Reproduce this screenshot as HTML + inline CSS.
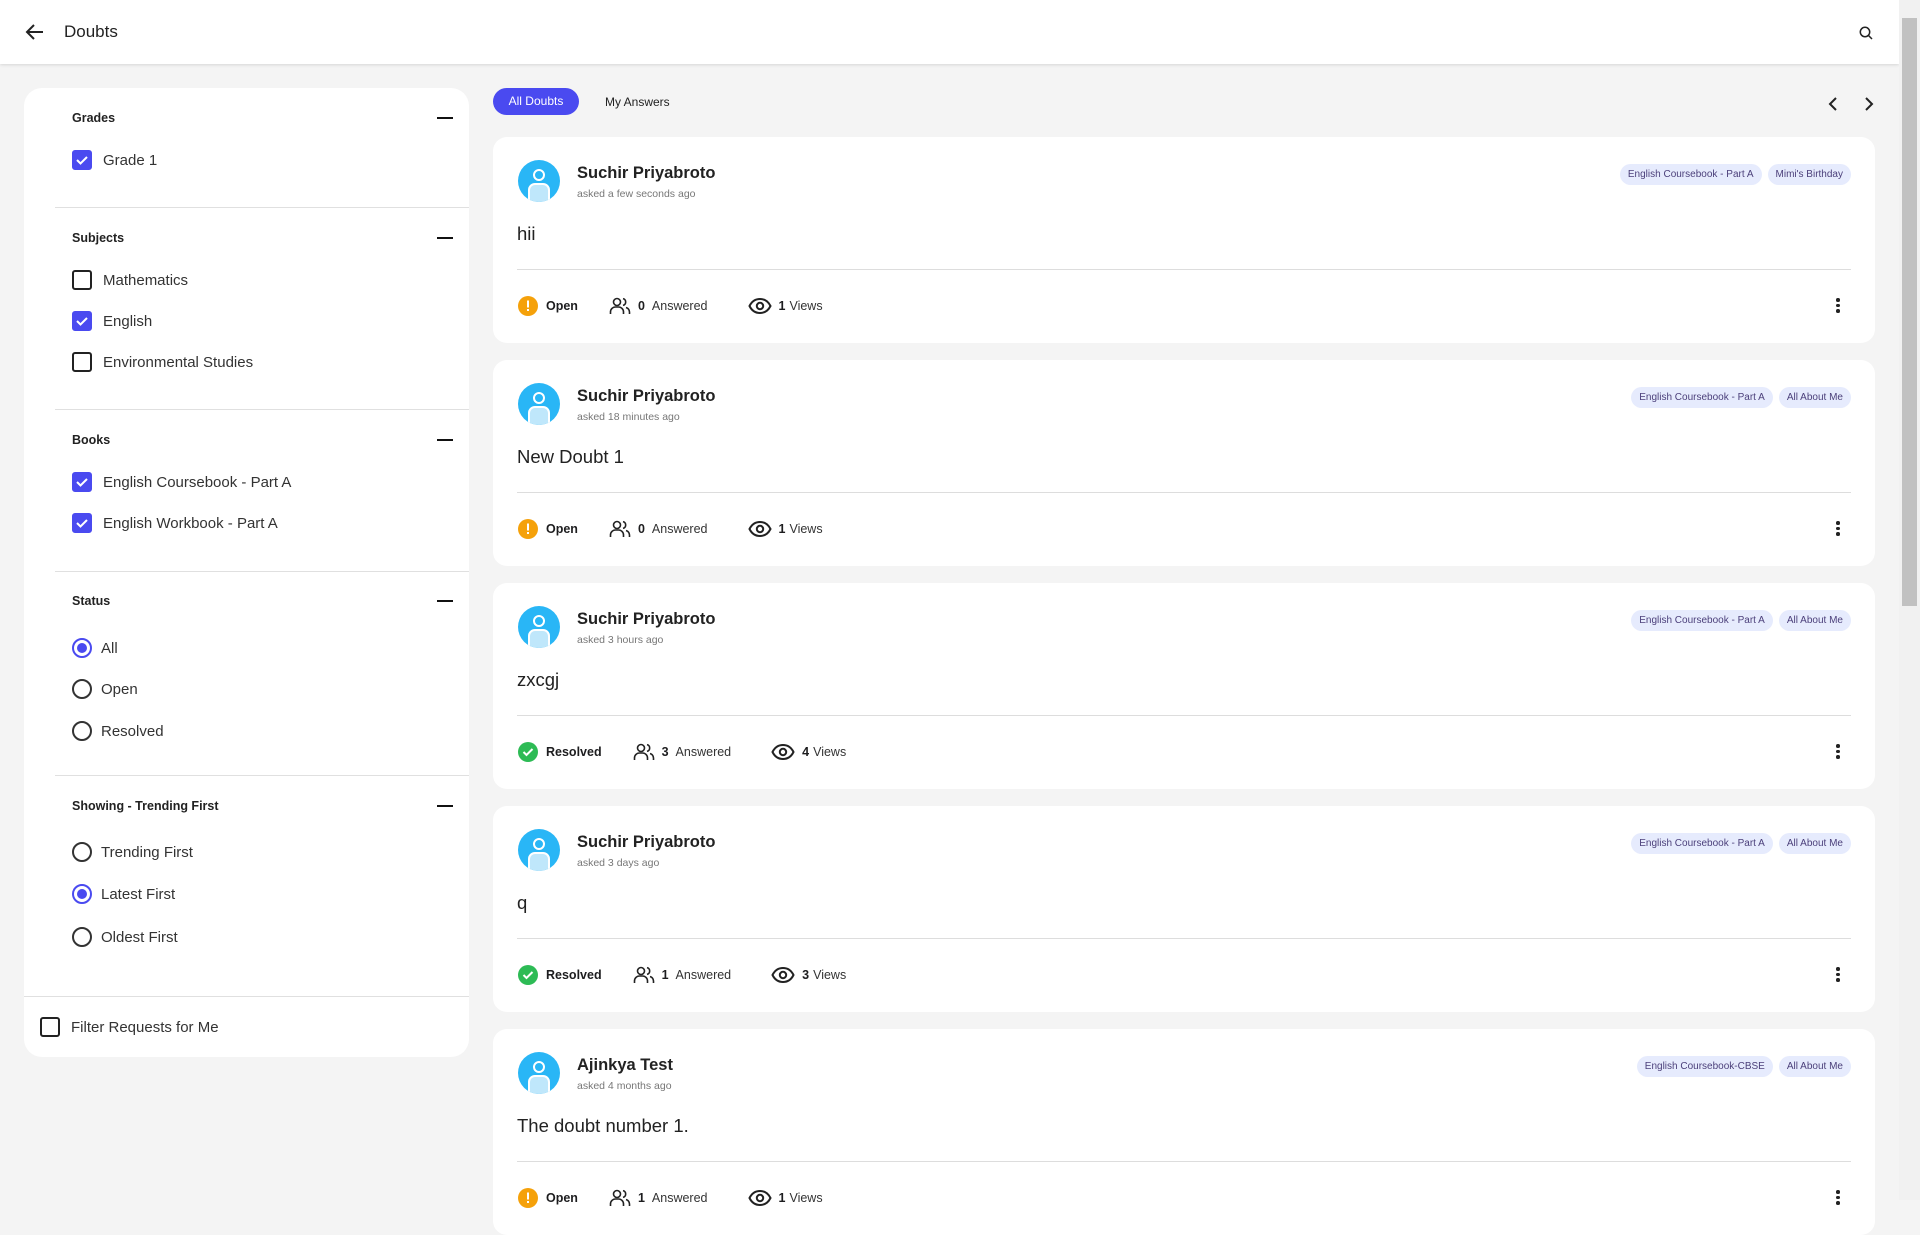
<!DOCTYPE html>
<html><head><meta charset="utf-8"><style>
*{box-sizing:border-box;margin:0;padding:0}
body{width:1920px;height:1200px;overflow:hidden;background:#f4f4f4;font-family:"Liberation Sans",sans-serif;color:#1d1d1f;position:relative}
.hdr{position:absolute;left:0;top:0;width:1899px;height:64px;background:#fff;box-shadow:0 1px 3px rgba(0,0,0,.12)}
.hdr .t{position:absolute;left:64px;top:22px;font-size:17px;color:#222}
.sb{position:absolute;left:1899px;top:0;width:21px;height:1200px;background:#f1f1f1}
.sb div{position:absolute;left:3px;top:18px;width:15px;height:588px;background:#c1c1c1}
.side{position:absolute;left:24px;top:88px;width:445px;height:969px;background:#fff;border-radius:18px}
.sec{position:absolute;left:48px;font-size:12.5px;font-weight:bold;color:#222}
.minus{position:absolute;left:413px;width:16px;height:2px;background:#111}
.div{position:absolute;left:31px;right:0;height:1px;background:#e0e0e0}
.item{position:absolute;left:48px;font-size:15px;color:#333;display:flex;align-items:center;height:22px}
.cb{width:20px;height:20px;border:2px solid #222;border-radius:3px;margin-right:11px;flex:none}
.cb.on{background:#4a4af0;border-color:#4a4af0;display:flex;align-items:center;justify-content:center}
.rd{width:20px;height:20px;border:2px solid #333;border-radius:50%;margin-right:9px;flex:none;position:relative}
.rd.on{border-color:#4a4af0}
.rd.on:after{content:"";position:absolute;left:3px;top:3px;width:10px;height:10px;border-radius:50%;background:#4a4af0}
.pill{position:absolute;left:493px;top:88px;width:86px;height:27px;border-radius:14px;background:#4a4af0;color:#fff;font-size:12px;text-align:center;line-height:27px}
.tab2{position:absolute;left:605px;top:95px;font-size:12px;color:#222}
.card{position:absolute;left:493px;width:1382px;height:206px;background:#fff;border-radius:14px}
.av{position:absolute;left:25px;top:23px;width:42px;height:42px;border-radius:50%;background:#29b6f6;overflow:hidden}
.name{position:absolute;left:84px;top:27px;font-size:16.5px;font-weight:bold;color:#222}
.ago{position:absolute;left:84px;top:51px;font-size:10.5px;color:#777}
.q{position:absolute;left:24px;top:86px;font-size:18.5px;color:#222}
.cdiv{position:absolute;left:24px;right:24px;top:132px;height:1px;background:#ddd}
.tags{position:absolute;right:24px;top:27px;display:flex;gap:6px}
.tag{background:#e6ebfd;color:#4b3f7a;font-size:10px;height:21px;line-height:21px;padding:0 8px;border-radius:11px}
.foot{position:absolute;left:25px;top:159px;display:flex;align-items:center;font-size:12.5px;height:20px}
.foot b{font-weight:bold}
.kb{position:absolute;right:35px;top:161px;width:4px}
.kb i{display:block;width:3.5px;height:3.5px;border-radius:50%;background:#222;margin-bottom:2px}
</style></head><body>
<div class="hdr">
<svg style="position:absolute;left:25px;top:22px" width="20" height="20" viewBox="0 0 20 20"><path d="M18 10H3M9 3L2 10l7 7" fill="none" stroke="#222" stroke-width="2"/></svg>
<div class="t">Doubts</div>
<svg style="position:absolute;left:1859px;top:26px" width="14" height="14" viewBox="0 0 14 14"><circle cx="6" cy="6" r="4.7" fill="none" stroke="#222" stroke-width="1.5"/><path d="M9.5 9.5L13 13" stroke="#222" stroke-width="1.5"/></svg>
</div>
<div class="sb"><div></div></div>

<div class="side">
<div class="sec" style="top:23px">Grades</div><div class="minus" style="top:29px"></div>
<div class="item" style="top:61px"><div class="cb on"><svg width="12" height="10"><path d="M1 5l3.5 3.5L11 2" fill="none" stroke="#fff" stroke-width="2"/></svg></div>Grade 1</div>
<div class="div" style="top:119px"></div>
<div class="sec" style="top:143px">Subjects</div><div class="minus" style="top:149px"></div>
<div class="item" style="top:181px"><div class="cb"></div>Mathematics</div>
<div class="item" style="top:222px"><div class="cb on"><svg width="12" height="10"><path d="M1 5l3.5 3.5L11 2" fill="none" stroke="#fff" stroke-width="2"/></svg></div>English</div>
<div class="item" style="top:263px"><div class="cb"></div>Environmental Studies</div>
<div class="div" style="top:321px"></div>
<div class="sec" style="top:345px">Books</div><div class="minus" style="top:351px"></div>
<div class="item" style="top:383px"><div class="cb on"><svg width="12" height="10"><path d="M1 5l3.5 3.5L11 2" fill="none" stroke="#fff" stroke-width="2"/></svg></div>English Coursebook - Part A</div>
<div class="item" style="top:424px"><div class="cb on"><svg width="12" height="10"><path d="M1 5l3.5 3.5L11 2" fill="none" stroke="#fff" stroke-width="2"/></svg></div>English Workbook - Part A</div>
<div class="div" style="top:483px"></div>
<div class="sec" style="top:506px">Status</div><div class="minus" style="top:512px"></div>
<div class="item" style="top:549px"><div class="rd on"></div>All</div>
<div class="item" style="top:590px"><div class="rd"></div>Open</div>
<div class="item" style="top:632px"><div class="rd"></div>Resolved</div>
<div class="div" style="top:687px"></div>
<div class="sec" style="top:711px">Showing - Trending First</div><div class="minus" style="top:717px"></div>
<div class="item" style="top:753px"><div class="rd"></div>Trending First</div>
<div class="item" style="top:795px"><div class="rd on"></div>Latest First</div>
<div class="item" style="top:838px"><div class="rd"></div>Oldest First</div>
<div class="div" style="top:908px;left:0"></div>
<div class="item" style="top:928px;left:16px"><div class="cb"></div>Filter Requests for Me</div>
</div>

<div class="pill">All Doubts</div>
<div class="tab2">My Answers</div>
<svg style="position:absolute;left:1827px;top:96px" width="12" height="16" viewBox="0 0 12 16"><path d="M9 2L3 8l6 6" fill="none" stroke="#222" stroke-width="2"/></svg>
<svg style="position:absolute;left:1863px;top:96px" width="12" height="16" viewBox="0 0 12 16"><path d="M3 2l6 6-6 6" fill="none" stroke="#222" stroke-width="2"/></svg>

<div id="cards"></div>
<script>
var data=[
["Suchir Priyabroto","asked a few seconds ago","hii","English Coursebook - Part A","Mimi's Birthday",0,0,1],
["Suchir Priyabroto","asked 18 minutes ago","New Doubt 1","English Coursebook - Part A","All About Me",0,0,1],
["Suchir Priyabroto","asked 3 hours ago","zxcgj","English Coursebook - Part A","All About Me",1,3,4],
["Suchir Priyabroto","asked 3 days ago","q","English Coursebook - Part A","All About Me",1,1,3],
["Ajinkya Test","asked 4 months ago","The doubt number 1.","English Coursebook-CBSE","All About Me",0,1,1]];
var h="";
var av='<div class="av"><svg width="42" height="42" viewBox="0 0 42 42"><circle cx="21" cy="15" r="5" fill="none" stroke="#fff" stroke-width="2"/><path d="M11 42V30a6 6 0 0 1 6-6h8a6 6 0 0 1 6 6v12" fill="#bfe7fb" stroke="#fff" stroke-width="2"/></svg></div>';
var open='<svg width="20" height="20"><circle cx="10" cy="10" r="10" fill="#f5a10a"/><rect x="9" y="4.5" width="2" height="7" fill="#fff"/><rect x="9" y="13" width="2" height="2" fill="#fff"/></svg>';
var res='<svg width="20" height="20"><circle cx="10" cy="10" r="10" fill="#2dbb55"/><path d="M5.5 10l3 3 6-6" fill="none" stroke="#fff" stroke-width="2"/></svg>';
var ppl='<svg width="22" height="20" viewBox="0 0 22 20"><circle cx="8" cy="6" r="3.5" fill="none" stroke="#222" stroke-width="1.6"/><path d="M1.5 18v-2a5 5 0 0 1 5-5h3a5 5 0 0 1 5 5v2M14 2.6a3.5 3.5 0 0 1 0 6.8M17 11.5a5 5 0 0 1 3.5 4.5v2" fill="none" stroke="#222" stroke-width="1.6"/></svg>';
var eye='<svg width="24" height="20" viewBox="0 0 24 20"><path d="M1.5 10C4 5 8 3 12 3s8 2 10.5 7C20 15 16 17 12 17S4 15 1.5 10z" fill="none" stroke="#222" stroke-width="2"/><circle cx="12" cy="10" r="3.2" fill="none" stroke="#222" stroke-width="2"/></svg>';
data.forEach(function(d,i){
h+='<div class="card" style="top:'+(137+223*i)+'px">'+av+'<div class="name">'+d[0]+'</div><div class="ago">'+d[1]+'</div><div class="tags"><div class="tag">'+d[3]+'</div><div class="tag">'+d[4]+'</div></div><div class="q">'+d[2]+'</div><div class="cdiv"></div>'+
'<div class="foot">'+(d[5]?res:open)+'<b style="margin-left:8px;margin-right:31px">'+(d[5]?'Resolved':'Open')+'</b>'+ppl+'<b style="margin-left:7px;margin-right:7px">'+d[6]+'</b><span style="margin-right:40px;color:#333">Answered</span>'+eye+'<b style="margin-left:7px;margin-right:4px">'+d[7]+'</b><span style="color:#333">Views</span></div>'+
'<div class="kb"><i></i><i></i><i></i></div></div>';});
document.getElementById("cards").innerHTML=h;
</script>
</body></html>
